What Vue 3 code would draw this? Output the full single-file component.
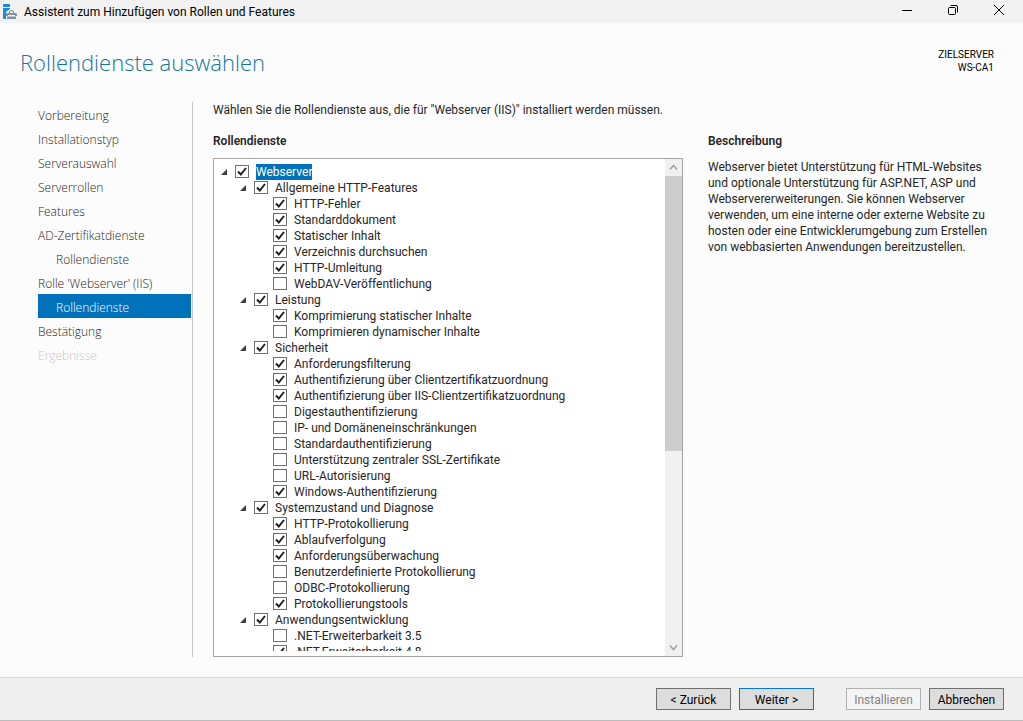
<script setup>
import { ref } from 'vue'

const steps = [
  { label: 'Vorbereitung' },
  { label: 'Installationstyp' },
  { label: 'Serverauswahl' },
  { label: 'Serverrollen' },
  { label: 'Features' },
  { label: 'AD-Zertifikatdienste' },
  { label: 'Rollendienste', sub: true },
  { label: "Rolle 'Webserver' (IIS)" },
  { label: 'Rollendienste', sub: true, current: true },
  { label: 'Bestätigung' },
  { label: 'Ergebnisse', disabled: true }
]

const row = (level, label, checked) => ({ level, label, checked })
const rows = ref([
  row(1, 'Webserver', true),
  row(2, 'Allgemeine HTTP-Features', true),
  row(3, 'HTTP-Fehler', true),
  row(3, 'Standarddokument', true),
  row(3, 'Statischer Inhalt', true),
  row(3, 'Verzeichnis durchsuchen', true),
  row(3, 'HTTP-Umleitung', true),
  row(3, 'WebDAV-Veröffentlichung', false),
  row(2, 'Leistung', true),
  row(3, 'Komprimierung statischer Inhalte', true),
  row(3, 'Komprimieren dynamischer Inhalte', false),
  row(2, 'Sicherheit', true),
  row(3, 'Anforderungsfilterung', true),
  row(3, 'Authentifizierung über Clientzertifikatzuordnung', true),
  row(3, 'Authentifizierung über IIS-Clientzertifikatzuordnung', true),
  row(3, 'Digestauthentifizierung', false),
  row(3, 'IP- und Domäneneinschränkungen', false),
  row(3, 'Standardauthentifizierung', false),
  row(3, 'Unterstützung zentraler SSL-Zertifikate', false),
  row(3, 'URL-Autorisierung', false),
  row(3, 'Windows-Authentifizierung', true),
  row(2, 'Systemzustand und Diagnose', true),
  row(3, 'HTTP-Protokollierung', true),
  row(3, 'Ablaufverfolgung', true),
  row(3, 'Anforderungsüberwachung', true),
  row(3, 'Benutzerdefinierte Protokollierung', false),
  row(3, 'ODBC-Protokollierung', false),
  row(3, 'Protokollierungstools', true),
  row(2, 'Anwendungsentwicklung', true),
  row(3, '.NET-Erweiterbarkeit 3.5', false),
  row(3, '.NET-Erweiterbarkeit 4.8', true)
])
const selected = ref(0)
</script>

<template>
  <div class="window">
    <header class="titlebar">
      <svg class="app-icon" width="16" height="16" viewBox="0 0 16 16" aria-hidden="true">
        <path fill="#1f8ad6" d="M1 0h7v3H1zM1 4h7v1L4 8v7H1z" />
        <path fill="none" stroke="#7c93a3" d="M7.500 9V8q0-1.500 1.500-1.500h1q1.500 0 1.500 1.500v1" />
        <path fill="#7c93a3" d="M5 9h9l1 1v2h-2v-1H6v1H4v-2zM5 12.500h9V15H5z" />
      </svg>
      <span class="caption">Assistent zum Hinzufügen von Rollen und Features</span>
      <button class="win-btn" type="button" aria-label="Minimieren">
        <svg width="12" height="12" viewBox="0 0 12 12"><path d="M1 6.500h10" /></svg>
      </button>
      <button class="win-btn" type="button" aria-label="Wiederherstellen">
        <svg width="12" height="12" viewBox="0 0 12 12">
          <rect x="1.500" y="3.500" width="7" height="7" rx="1" />
          <path d="M3.500 1.500H9q1.500 0 1.500 1.500v5.500" />
        </svg>
      </button>
      <button class="win-btn" type="button" aria-label="Schließen">
        <svg width="12" height="12" viewBox="0 0 12 12"><path d="M1 1l10 10M11 1L1 11" /></svg>
      </button>
    </header>

    <div class="heading">
      <h1>Rollendienste auswählen</h1>
      <p class="target">ZIELSERVER<br />WS-CA1</p>
    </div>

    <div class="body">
      <nav class="steps" aria-label="Schritte">
        <a
          v-for="(s, i) in steps"
          :key="i"
          href="#"
          :class="{ sub: s.sub, current: s.current, disabled: s.disabled }"
          @click.prevent
        >{{ s.label }}</a>
      </nav>

      <main class="content">
        <p class="intro">Wählen Sie die Rollendienste aus, die für "Webserver (IIS)" installiert werden müssen.</p>
        <div class="columns">
          <section class="roles">
            <h2>Rollendienste</h2>
            <div class="tree-box">
              <ul class="tree">
                <li v-for="(r, i) in rows" :key="i" :class="'level-' + r.level" @click="selected = i">
                  <span class="expander">
                    <svg v-if="r.level < 3" width="8" height="8" viewBox="0 0 8 8" aria-hidden="true">
                      <path d="M7 1v6H1z" fill="#404040" />
                    </svg>
                  </span>
                  <span class="check">
                    <input :id="'role-' + i" v-model="r.checked" type="checkbox" />
                    <svg v-if="r.checked" width="14" height="13" viewBox="0 0 14 13" aria-hidden="true">
                      <path d="M3 6.500L5.800 9.500L11 3" fill="none" stroke="#212121" stroke-width="2" />
                    </svg>
                  </span>
                  <label :for="'role-' + i" :class="{ selected: selected === i }">{{ r.label }}</label>
                </li>
              </ul>
              <div class="scrollbar">
                <button type="button" aria-label="Nach oben">
                  <svg width="9" height="9" viewBox="0 0 9 9"><path d="M1 6.500l3.500-4 3.500 4" /></svg>
                </button>
                <div class="track"><div class="thumb"></div></div>
                <button type="button" aria-label="Nach unten">
                  <svg width="9" height="9" viewBox="0 0 9 9"><path d="M1 2.500l3.500 4 3.500-4" /></svg>
                </button>
              </div>
            </div>
          </section>
          <section class="description">
            <h2>Beschreibung</h2>
            <p>Webserver bietet Unterstützung für HTML-Websites und optionale Unterstützung für ASP.NET, ASP und Webservererweiterungen. Sie können Webserver verwenden, um eine interne oder externe Website zu hosten oder eine Entwicklerumgebung zum Erstellen von webbasierten Anwendungen bereitzustellen.</p>
          </section>
        </div>
      </main>
    </div>

    <footer class="actions">
      <button type="button">&lt; Zurück</button>
      <button type="button" class="primary">Weiter &gt;</button>
      <button type="button" class="install" disabled>Installieren</button>
      <button type="button">Abbrechen</button>
    </footer>
  </div>
</template>

<style>
body {
  margin: 0;
}
</style>

<style scoped>
.window {
  display: flex;
  flex-direction: column;
  box-sizing: border-box;
  height: 100vh;
  background: #fcfcfc;
  color: #262626;
  font-family: Roboto, "Noto Sans", sans-serif;
  font-size: 12px;
  line-height: 16px;
}
h1, h2, p, ul {
  margin: 0;
  padding: 0;
}
button {
  box-sizing: border-box;
  margin: 0;
  padding: 0;
  font: inherit;
}
svg {
  display: block;
}
.titlebar {
  display: flex;
  align-items: center;
  height: 23px;
  padding: 0 1px 0 2px;
  background: #f2f2f2;
  color: #000;
}
.caption {
  flex: 1;
  padding-left: 6px;
}
.win-btn {
  display: grid;
  place-items: center;
  width: 46px;
  height: 23px;
  border: 0;
  background: none;
}
.win-btn svg {
  margin-bottom: 3px;
  fill: none;
  stroke: #000;
}
.heading {
  display: flex;
  justify-content: space-between;
  align-items: flex-start;
  padding: 24px 29px 0 20px;
}
h1 {
  color: #14759f;
  font-family: "Open Sans", "Noto Sans", sans-serif;
  font-size: 22px;
  font-weight: 300;
  line-height: 30px;
}
.target {
  color: #000;
  font-size: 10px;
  line-height: 13px;
  padding-top: 1px;
  text-align: right;
}
.body {
  display: flex;
  flex: 1;
  min-height: 0;
  padding: 25px 28px 20px 38px;
}
.steps {
  display: flex;
  flex-direction: column;
  flex: none;
  width: 153px;
  padding-right: 1px;
  border-right: 1px solid #c8c8c8;
}
.steps a {
  padding-top: 4px;
  color: #262626;
  font-family: "Open Sans", "Noto Sans", sans-serif;
  font-weight: 300;
  line-height: 20px;
  text-decoration: none;
  white-space: nowrap;
}
.steps .sub {
  padding-left: 18px;
}
.steps .current {
  background: #0072bc;
  color: #fff;
}
.steps .disabled {
  color: #c8c8c8;
}
.content {
  display: flex;
  flex: 1;
  flex-direction: column;
  min-width: 0;
  padding-left: 20px;
}
.columns {
  display: grid;
  flex: 1;
  grid-template-columns: minmax(0, 1fr) 287px;
  grid-template-rows: minmax(0, 1fr);
  gap: 25px;
  min-height: 0;
  padding-top: 15px;
}
h2 {
  margin-bottom: 9px;
  font-size: 12px;
  font-weight: 600;
  line-height: 16px;
}
.roles {
  display: flex;
  flex-direction: column;
  min-height: 0;
}
.tree-box {
  display: flex;
  flex: 1;
  min-height: 0;
  border: 1px solid #a5a5a5;
  background: #fff;
}
.tree {
  flex: 1;
  min-width: 0;
  margin: 5px 0;
  overflow: hidden;
  list-style: none;
}
.tree li {
  display: flex;
  align-items: flex-start;
  height: 16px;
  padding-left: 6px;
}
.tree .level-2 {
  padding-left: 25px;
}
.tree .level-3 {
  padding-left: 44px;
}
.expander {
  flex: none;
  width: 15px;
  padding-top: 4px;
}
.check {
  display: grid;
  flex: none;
  margin: 1px 7px 0 0;
}
.check > * {
  grid-area: 1 / 1;
}
.check svg {
  pointer-events: none;
}
.check input {
  box-sizing: border-box;
  width: 14px;
  height: 13px;
  margin: 0;
  border: 1px solid #707070;
  background: #fff;
  appearance: none;
}
.tree label {
  line-height: 16px;
  white-space: nowrap;
}
.tree .selected {
  background: #0072bc;
  color: #fff;
}
.scrollbar {
  display: flex;
  flex: none;
  flex-direction: column;
  width: 17px;
  background: #f0f0f0;
}
.scrollbar button {
  display: grid;
  place-items: center;
  height: 17px;
  border: 0;
  background: none;
}
.scrollbar svg {
  fill: none;
  stroke: #a0a0a0;
  stroke-width: 1.500;
}
.track {
  flex: 1;
}
.thumb {
  height: 59.5%;
  background: #cdcdcd;
}
.description h2 {
  margin-bottom: 10px;
}
.actions {
  display: flex;
  justify-content: flex-end;
  gap: 8px;
  padding: 10px 19px;
  border-top: 1px solid #dadada;
  border-bottom: 1px solid #bcbcbc;
  background: #efefef;
}
.actions button {
  width: 75px;
  height: 22px;
  padding-top: 2px;
  border: 1px solid #707070;
  background: #dddddd;
  color: #000;
}
.actions .primary {
  border-color: #0078d7;
}
.actions .install {
  margin-left: 24px;
  border-color: #adb2b5;
  background: #f4f4f4;
  color: #838383;
}
</style>
